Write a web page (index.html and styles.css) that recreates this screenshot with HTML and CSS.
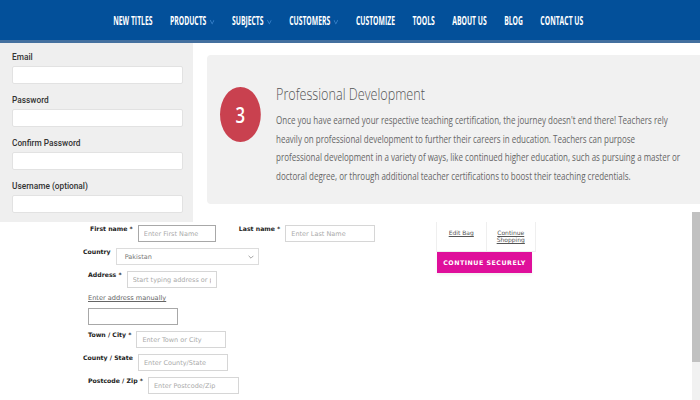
FILE: index.html
```html
<!DOCTYPE html>
<html lang="en">
<head>
<meta charset="utf-8">
<title>Checkout</title>
<link rel="stylesheet" href="styles.css">
</head>
<body>
<nav class="topnav">
  <ul class="menu">
    <li>NEW TITLES</li>
    <li>PRODUCTS<svg class="caret" viewBox="0 0 10 6"><path d="M1 1l4 4 4-4"/></svg></li>
    <li>SUBJECTS<svg class="caret" viewBox="0 0 10 6"><path d="M1 1l4 4 4-4"/></svg></li>
    <li>CUSTOMERS<svg class="caret" viewBox="0 0 10 6"><path d="M1 1l4 4 4-4"/></svg></li>
    <li>CUSTOMIZE</li>
    <li>TOOLS</li>
    <li>ABOUT US</li>
    <li>BLOG</li>
    <li>CONTACT US</li>
  </ul>
</nav>
<div class="page">
  <section class="top">
    <form class="signup">
      <div class="field"><label>Email</label><input class="box" type="text"></div>
      <div class="field"><label>Password</label><input class="box" type="password"></div>
      <div class="field"><label>Confirm Password</label><input class="box" type="password"></div>
      <div class="field"><label>Username (optional)</label><input class="box" type="text"></div>
    </form>
    <div class="feature">
      <article class="card">
        <div class="card-inner">
          <div class="badge">3</div>
          <div class="copy">
            <h2>Professional Development</h2>
            <p>Once you have earned your respective teaching certification, the journey doesn't end there! Teachers rely<br>heavily on professional development to further their careers in education. Teachers can purpose<br>professional development in a variety of ways, like continued higher education, such as pursuing a master or<br>doctoral degree, or through additional teacher certifications to boost their teaching credentials.</p>
          </div>
        </div>
      </article>
    </div>
  </section>

  <section class="checkout">
    <form class="address">
      <div class="row first shift-7">
        <label>First name *</label><input class="inp focus w78" placeholder="Enter First Name">
        <label class="pair">Last name *</label><input class="inp w90" placeholder="Enter Last Name">
      </div>
      <div class="row">
        <label>Country</label>
        <div class="select"><span>Pakistan</span><svg viewBox="0 0 10 6"><path d="M1 1l4 4 4-4"/></svg></div>
      </div>
      <div class="row shift-5">
        <label>Address *</label><input class="inp w90" placeholder="Start typing address or postcode">
      </div>
      <div class="row shift-5"><a class="manual" href="#">Enter address manually</a></div>
      <div class="row shift-5"><input class="inp focus w90"></div>
      <div class="row shift-5">
        <label>Town / City *</label><input class="inp w90" placeholder="Enter Town or City">
      </div>
      <div class="row">
        <label>County / State</label><input class="inp w90" placeholder="Enter County/State">
      </div>
      <div class="row shift-5">
        <label>Postcode / Zip *</label><input class="inp w91" placeholder="Enter Postcode/Zip">
      </div>
    </form>
    <aside class="cart">
      <div class="cart-links">
        <a href="#">Edit Bag</a>
        <a href="#">Continue<br>Shopping</a>
      </div>
      <button class="secure" type="button">CONTINUE SECURELY</button>
    </aside>
  </section>
  <div class="scrollbar"><div class="thumb"></div></div>
</div>
</body>
</html>
```
FILE: styles.css
```css
* { box-sizing: border-box; }
html, body { margin: 0; padding: 0; }
body {
  background: #fff;
  font-family: "Open Sans", "DejaVu Sans", sans-serif;
  overflow: hidden;
  width: 700px;
  height: 400px;
}

/* ---------- nav ---------- */
.topnav {
  height: 43px;
  background: #03509a;
  border-bottom: 3px solid #44709f;
  padding-top: 2px;
  display: flex;
  justify-content: center;
  overflow: hidden;
}
.menu {
  list-style: none;
  margin: 0 4px 0 0;
  padding: 0;
  display: flex;
  align-items: center;
  gap: 32px;
  transform: scaleX(0.545);
  flex: none;
}
.menu li {
  font-family: "Open Sans", sans-serif;
  font-weight: 700;
  font-size: 12.5px;
  color: #fff;
  line-height: 38px;
  white-space: nowrap;
  display: flex;
  align-items: center;
}
.caret {
  width: 9px;
  height: 6px;
  margin-left: 6px;
  margin-top: 2px;
  fill: none;
  stroke: #3f87cf;
  stroke-width: 1.2;
}

/* ---------- top ---------- */
.page { position: relative; }
.top {
  display: flex;
  align-items: flex-start;
}
.signup {
  width: 193px;
  flex: none;
  background: #efefef;
  padding: 8px 10px 9px 12px;
  margin: 0;
}
.field { margin-bottom: 10px; }
.field:last-child { margin-bottom: 0; }
.field label {
  display: block;
  font-family: Roboto, "Liberation Sans", sans-serif;
  font-weight: 500;
  font-size: 8.3px;
  line-height: 12px;
  color: #333;
  margin-bottom: 3px;
}
.box {
  display: block;
  width: 171px;
  height: 18px;
  border: 1px solid #e2e2e2;
  border-radius: 2px;
  background: #fff;
  margin: 0;
}

.feature {
  flex: 1;
  padding: 12px 7px 0 14px;
}
.card {
  background: #f1f1f1;
  border-radius: 4px;
  height: 149px;
  padding: 29px 0 0 13px;
  overflow: hidden;
}
.card-inner {
  display: flex;
  align-items: flex-start;
  width: max-content;
  transform: scaleX(0.8);
  transform-origin: left top;
}
.badge {
  width: 51px;
  height: 55px;
  border-radius: 50%;
  background: #c9414f;
  color: #fff;
  font-family: "Open Sans", sans-serif;
  font-weight: 600;
  font-size: 21px;
  display: flex;
  align-items: center;
  justify-content: center;
  margin-top: 3px;
  margin-right: 19px;
  flex: none;
}
.copy h2 {
  margin: 0 0 7px;
  font-family: "Open Sans", sans-serif;
  font-weight: 300;
  font-size: 15.8px;
  line-height: 20px;
  color: #555;
}
.copy p {
  margin: 0;
  font-family: "Open Sans", sans-serif;
  font-size: 10px;
  line-height: 18.6px;
  color: #666;
  white-space: nowrap;
}

/* ---------- checkout ---------- */
.checkout {
  display: flex;
  align-items: flex-start;
}
.address {
  width: 436px;
  flex: none;
  padding: 3px 0 0 83px;
  margin: 0;
}
.row {
  display: flex;
  align-items: flex-start;
  gap: 5px;
  margin-top: 6px;
}
.row.first { margin-top: 0; }
.shift-5 { margin-left: 5px; }
.shift-7 { margin-left: 7px; }
.row label {
  font-family: "DejaVu Sans", sans-serif;
  font-weight: 700;
  font-size: 6.2px;
  line-height: 8px;
  color: #222;
  white-space: nowrap;
}
.row label.pair { margin-left: 18px; }
.inp {
  height: 17px;
  border: 1px solid #d6d6d6;
  background: #fff;
  margin: 0;
  padding: 0 5px;
  font-family: "DejaVu Sans", sans-serif;
  font-size: 6.5px;
  color: #333;
  border-radius: 0;
}
.inp::placeholder { color: #aaa; }
.inp.focus { border-color: #a8a8a8; }
.w78 { width: 78px; }
.w90 { width: 90px; }
.w91 { width: 91px; }
.select {
  width: 143px;
  height: 17px;
  border: 1px solid #dcdcdc;
  display: flex;
  align-items: center;
  justify-content: space-between;
  padding: 0 4px 0 8px;
  font-family: "DejaVu Sans", sans-serif;
  font-size: 6.5px;
  color: #777;
}
.select svg {
  width: 6px;
  height: 4px;
  fill: none;
  stroke: #888;
  stroke-width: 1.3;
}
.manual {
  font-family: "DejaVu Sans", sans-serif;
  font-size: 6.6px;
  line-height: 8px;
  color: #666;
  text-decoration: underline;
}

.cart {
  width: 100px;
  flex: none;
}
.cart-links {
  display: flex;
  height: 30px;
  border: 1px solid #efefef;
  border-top: none;
}
.cart-links a {
  flex: 1;
  text-align: center;
  font-family: "DejaVu Sans", sans-serif;
  font-size: 6px;
  line-height: 7px;
  padding-top: 7px;
  color: #555;
  text-decoration: underline;
}
.cart-links a + a { border-left: 1px solid #efefef; }
.secure {
  display: block;
  width: 95px;
  height: 21px;
  margin: 0 0 0 1px;
  border: none;
  background: #df0f9b;
  color: #fff;
  font-family: "DejaVu Sans", sans-serif;
  font-weight: 700;
  font-size: 6.3px;
  letter-spacing: 0.5px;
  padding: 0;
  box-shadow: 0 2px 3px rgba(0,0,0,0.06);
}

.scrollbar {
  position: absolute;
  right: 0;
  top: 169px;
  width: 8px;
  height: 188px;
  background: #f1f1f1;
}
.thumb {
  height: 150px;
  background: #c1c1c1;
}
```
